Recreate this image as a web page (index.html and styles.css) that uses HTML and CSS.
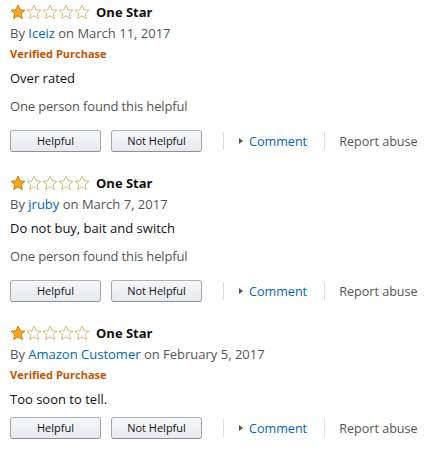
FILE: index.html
```html
<!DOCTYPE html>
<html>
<head>
<meta charset="utf-8">
<link rel="stylesheet" href="styles.css">
</head>
<body>
<div class="list">
  <div class="review">
    <div class="title-row">
      <span class="stars">
        <svg class="star" viewBox="0 0 16 16"><polygon class="full" points="8,1 10,5.8 15,6.2 11.2,9.5 12.4,14.6 8,11.9 3.6,14.6 4.8,9.5 1,6.2 6,5.8"/></svg>
        <svg class="star" viewBox="0 0 16 16"><polygon class="empty" points="8,1 10,5.8 15,6.2 11.2,9.5 12.4,14.6 8,11.9 3.6,14.6 4.8,9.5 1,6.2 6,5.8"/></svg>
        <svg class="star" viewBox="0 0 16 16"><polygon class="empty" points="8,1 10,5.8 15,6.2 11.2,9.5 12.4,14.6 8,11.9 3.6,14.6 4.8,9.5 1,6.2 6,5.8"/></svg>
        <svg class="star" viewBox="0 0 16 16"><polygon class="empty" points="8,1 10,5.8 15,6.2 11.2,9.5 12.4,14.6 8,11.9 3.6,14.6 4.8,9.5 1,6.2 6,5.8"/></svg>
        <svg class="star" viewBox="0 0 16 16"><polygon class="empty" points="8,1 10,5.8 15,6.2 11.2,9.5 12.4,14.6 8,11.9 3.6,14.6 4.8,9.5 1,6.2 6,5.8"/></svg>
      </span>
      <span class="title">One Star</span>
    </div>
    <div class="byline">By <a class="author">Iceiz</a> on March 11, 2017</div>
    <div class="verified">Verified Purchase</div>
    <div class="body">Over rated</div>
    <div class="helpful-count">One person found this helpful</div>
    <div class="actions">
      <button class="btn">Helpful</button>
      <button class="btn">Not Helpful</button>
      <span class="sep"></span>
      <span class="comment"><span class="tri"></span>Comment</span>
      <span class="sep sep-right"></span>
      <span class="report">Report abuse</span>
    </div>
  </div>

  <div class="review">
    <div class="title-row">
      <span class="stars">
        <svg class="star" viewBox="0 0 16 16"><polygon class="full" points="8,1 10,5.8 15,6.2 11.2,9.5 12.4,14.6 8,11.9 3.6,14.6 4.8,9.5 1,6.2 6,5.8"/></svg>
        <svg class="star" viewBox="0 0 16 16"><polygon class="empty" points="8,1 10,5.8 15,6.2 11.2,9.5 12.4,14.6 8,11.9 3.6,14.6 4.8,9.5 1,6.2 6,5.8"/></svg>
        <svg class="star" viewBox="0 0 16 16"><polygon class="empty" points="8,1 10,5.8 15,6.2 11.2,9.5 12.4,14.6 8,11.9 3.6,14.6 4.8,9.5 1,6.2 6,5.8"/></svg>
        <svg class="star" viewBox="0 0 16 16"><polygon class="empty" points="8,1 10,5.8 15,6.2 11.2,9.5 12.4,14.6 8,11.9 3.6,14.6 4.8,9.5 1,6.2 6,5.8"/></svg>
        <svg class="star" viewBox="0 0 16 16"><polygon class="empty" points="8,1 10,5.8 15,6.2 11.2,9.5 12.4,14.6 8,11.9 3.6,14.6 4.8,9.5 1,6.2 6,5.8"/></svg>
      </span>
      <span class="title">One Star</span>
    </div>
    <div class="byline">By <a class="author">jruby</a> on March 7, 2017</div>
    <div class="body">Do not buy, bait and switch</div>
    <div class="helpful-count">One person found this helpful</div>
    <div class="actions">
      <button class="btn">Helpful</button>
      <button class="btn">Not Helpful</button>
      <span class="sep"></span>
      <span class="comment"><span class="tri"></span>Comment</span>
      <span class="sep sep-right"></span>
      <span class="report">Report abuse</span>
    </div>
  </div>

  <div class="review">
    <div class="title-row">
      <span class="stars">
        <svg class="star" viewBox="0 0 16 16"><polygon class="full" points="8,1 10,5.8 15,6.2 11.2,9.5 12.4,14.6 8,11.9 3.6,14.6 4.8,9.5 1,6.2 6,5.8"/></svg>
        <svg class="star" viewBox="0 0 16 16"><polygon class="empty" points="8,1 10,5.8 15,6.2 11.2,9.5 12.4,14.6 8,11.9 3.6,14.6 4.8,9.5 1,6.2 6,5.8"/></svg>
        <svg class="star" viewBox="0 0 16 16"><polygon class="empty" points="8,1 10,5.8 15,6.2 11.2,9.5 12.4,14.6 8,11.9 3.6,14.6 4.8,9.5 1,6.2 6,5.8"/></svg>
        <svg class="star" viewBox="0 0 16 16"><polygon class="empty" points="8,1 10,5.8 15,6.2 11.2,9.5 12.4,14.6 8,11.9 3.6,14.6 4.8,9.5 1,6.2 6,5.8"/></svg>
        <svg class="star" viewBox="0 0 16 16"><polygon class="empty" points="8,1 10,5.8 15,6.2 11.2,9.5 12.4,14.6 8,11.9 3.6,14.6 4.8,9.5 1,6.2 6,5.8"/></svg>
      </span>
      <span class="title">One Star</span>
    </div>
    <div class="byline">By <a class="author">Amazon Customer</a> on February 5, 2017</div>
    <div class="verified">Verified Purchase</div>
    <div class="body">Too soon to tell.</div>
    <div class="actions actions-tight">
      <button class="btn">Helpful</button>
      <button class="btn">Not Helpful</button>
      <span class="sep"></span>
      <span class="comment"><span class="tri"></span>Comment</span>
      <span class="sep sep-right"></span>
      <span class="report">Report abuse</span>
    </div>
  </div>
</div>
</body>
</html>
```
FILE: styles.css
```css
html, body {
  margin: 0;
  padding: 0;
  background: #fff;
}
body {
  font-family: "Open Sans", "Liberation Sans", sans-serif;
  font-size: 13px;
  color: #111;
}
.list {
  padding: 2px 10px 0 10px;
}
.review {
  margin-bottom: 21px;
}
.title-row {
  display: flex;
  align-items: center;
  height: 20px;
}
.stars {
  display: flex;
  align-items: center;
  margin-right: 6px;
}
.star {
  width: 16px;
  height: 16px;
  display: block;
}
.star .full {
  fill: #ffa41c;
  stroke: #d0860e;
  stroke-width: 1;
  stroke-linejoin: round;
}
.star .empty {
  fill: #fff;
  stroke: #d6b877;
  stroke-width: 1;
  stroke-linejoin: round;
}
.title {
  font-weight: 700;
  font-size: 13px;
  color: #111;
}
.byline {
  line-height: 20px;
  margin-top: 1px;
  color: #555;
}
.author {
  color: #0066c0;
  text-decoration: none;
}
.verified {
  line-height: 20px;
  margin-top: 1px;
  font-size: 11px;
  font-weight: 700;
  color: #c45500;
}
.body {
  line-height: 20px;
  margin-top: 4px;
  color: #111;
}
.helpful-count {
  line-height: 20px;
  margin-top: 8px;
  color: #555;
  letter-spacing: -0.15px;
}
.actions {
  display: flex;
  align-items: center;
  margin-top: 14px;
  height: 22px;
}
.actions-tight {
  margin-top: 8px;
}
.btn {
  width: 91px;
  height: 22px;
  margin: 0 10px 0 0;
  padding: 0;
  border: 1px solid #adb1b8;
  border-color: #adb1b8 #a2a6ac #8d9096;
  border-radius: 3px;
  background: linear-gradient(to bottom, #f7f8fa, #e7e9ec);
  font-family: "Open Sans", "Liberation Sans", sans-serif;
  font-size: 11px;
  color: #111;
  line-height: 20px;
}
.sep {
  width: 1px;
  height: 18px;
  background: #ddd;
  margin: 0 15px 0 11px;
}
.sep-right {
  margin: 0 14px 0 17px;
}
.comment {
  display: flex;
  align-items: center;
  color: #0066c0;
  font-size: 12.6px;
}
.tri {
  width: 0;
  height: 0;
  border-left: 4px solid #555;
  border-top: 3.5px solid transparent;
  border-bottom: 3.5px solid transparent;
  margin-right: 6px;
}
.report {
  color: #555;
  font-size: 12.6px;
}
```
